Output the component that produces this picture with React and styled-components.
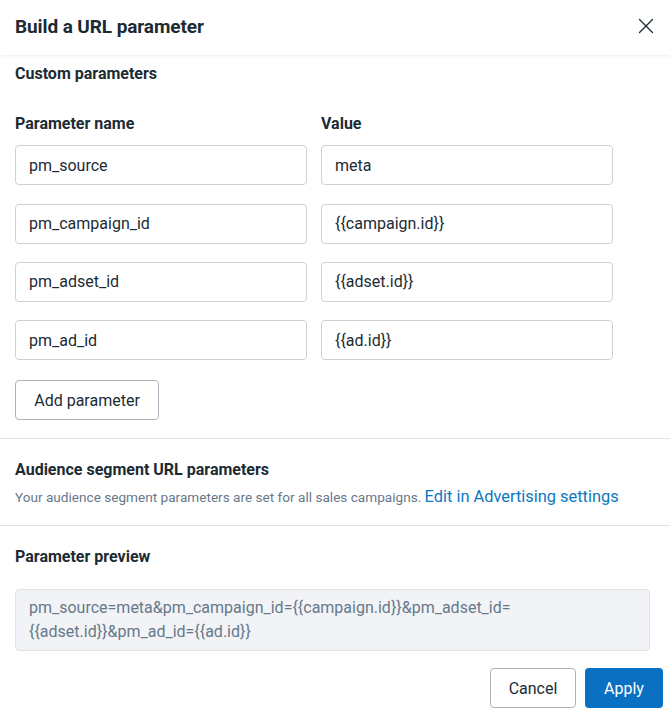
import React from 'react';
import styled, { createGlobalStyle } from 'styled-components';

const GlobalStyle = createGlobalStyle`
  html, body {
    margin: 0;
    padding: 0;
    background: #ffffff;
  }
  body {
    font-family: Roboto, "Liberation Sans", Arial, sans-serif;
    color: #1c2b33;
  }
`;

const params = [
  { name: 'pm_source', value: 'meta' },
  { name: 'pm_campaign_id', value: '{{campaign.id}}' },
  { name: 'pm_adset_id', value: '{{adset.id}}' },
  { name: 'pm_ad_id', value: '{{ad.id}}' },
];

const CloseIcon = () => (
  <svg width="16" height="16" viewBox="0 0 16 16" fill="none">
    <path d="M1.5 1.5L14.5 14.5M14.5 1.5L1.5 14.5" stroke="#1c2b33" strokeWidth="1.3" strokeLinecap="round" />
  </svg>
);

const App = () => {
  return (
    <>
      <GlobalStyle />
      <Dialog>
        <Header>
          <Title>Build a URL parameter</Title>
          <CloseButton aria-label="Close">
            <CloseIcon />
          </CloseButton>
        </Header>

        <Section $top={7} $bottom={18}>
          <SectionTitle>Custom parameters</SectionTitle>
          <Grid>
            <ColumnLabel>Parameter name</ColumnLabel>
            <ColumnLabel>Value</ColumnLabel>
            {params.map((p) => (
              <React.Fragment key={p.name}>
                <Field>{p.name}</Field>
                <Field>{p.value}</Field>
              </React.Fragment>
            ))}
          </Grid>
          <SecondaryButton $width={144}>Add parameter</SecondaryButton>
        </Section>

        <Divider />

        <Section $top={19} $bottom={17}>
          <SectionTitle>Audience segment URL parameters</SectionTitle>
          <Description>
            Your audience segment parameters are set for all sales campaigns.{' '}
            <Link href="#">Edit in Advertising settings</Link>
          </Description>
        </Section>

        <Divider />

        <Section $top={19} $bottom={0}>
          <SectionTitle>Parameter preview</SectionTitle>
          <Preview>
            pm_source=meta&amp;pm_campaign_id={'{{campaign.id}}'}&amp;pm_adset_id=
            <br />
            {'{{adset.id}}'}&amp;pm_ad_id={'{{ad.id}}'}
          </Preview>
        </Section>

        <Footer>
          <SecondaryButton $width={86}>Cancel</SecondaryButton>
          <PrimaryButton>Apply</PrimaryButton>
        </Footer>
      </Dialog>
    </>
  );
};

const Dialog = styled.div`
  width: 670px;
  height: 716px;
  background: #ffffff;
  display: flex;
  flex-direction: column;
  overflow: hidden;
`;

const Header = styled.div`
  height: 55px;
  flex-shrink: 0;
  display: flex;
  align-items: center;
  justify-content: space-between;
  padding: 0 12px 3px 15px;
  box-sizing: border-box;
  box-shadow: 0 1px 3px rgba(0, 0, 0, 0.08);
  position: relative;
  z-index: 1;
`;

const Title = styled.h1`
  margin: 0;
  font-size: 19px;
  font-weight: 700;
  color: #1c2b33;
  letter-spacing: -0.1px;
`;

const CloseButton = styled.button`
  width: 24px;
  height: 24px;
  padding: 0;
  border: none;
  background: transparent;
  display: flex;
  align-items: center;
  justify-content: center;
  cursor: pointer;
`;

const Section = styled.div`
  padding: ${(p) => p.$top}px 15px ${(p) => p.$bottom}px 15px;
  display: flex;
  flex-direction: column;
  align-items: flex-start;
`;

const SectionTitle = styled.h2`
  margin: 0;
  font-size: 16px;
  font-weight: 700;
  line-height: 24px;
  color: #1c2b33;
`;

const Grid = styled.div`
  display: grid;
  grid-template-columns: 292px 292px;
  column-gap: 14px;
  row-gap: 18.3px;
  margin-top: 28px;
  margin-bottom: 20px;
`;

const ColumnLabel = styled.div`
  font-size: 16px;
  font-weight: 700;
  line-height: 20px;
  margin-bottom: -7px;
`;

const Field = styled.div`
  height: 40px;
  box-sizing: border-box;
  border: 1px solid #cbd2d9;
  border-radius: 4px;
  padding: 0 13px;
  display: flex;
  align-items: center;
  font-size: 16px;
  color: #1c2b33;
`;

const SecondaryButton = styled.button`
  width: ${(p) => p.$width}px;
  height: 40px;
  box-sizing: border-box;
  border: 1px solid #a9b4bf;
  border-radius: 4px;
  background: #ffffff;
  font-family: inherit;
  font-size: 16px;
  font-weight: 400;
  color: #1c2b33;
  cursor: pointer;
`;

const PrimaryButton = styled.button`
  width: 78px;
  height: 40px;
  border: none;
  border-radius: 4px;
  background: #0a70c2;
  font-family: inherit;
  font-size: 16px;
  font-weight: 400;
  color: #ffffff;
  cursor: pointer;
`;

const Divider = styled.div`
  height: 1px;
  background: #dfe3e7;
  flex-shrink: 0;
`;

const Description = styled.p`
  margin: 4px 0 0;
  font-size: 13.6px;
  line-height: 22px;
  color: #67788a;
`;

const Link = styled.a`
  font-size: 16.4px;
  color: #0a78be;
  text-decoration: none;
`;

const Preview = styled.div`
  margin-top: 20px;
  width: 635px;
  box-sizing: border-box;
  background: #f1f3f6;
  border: 1px solid #dfe3e7;
  border-radius: 4px;
  padding: 6px 13px;
  font-size: 16px;
  line-height: 24px;
  color: #67788a;
`;

const Footer = styled.div`
  display: flex;
  justify-content: flex-end;
  gap: 9px;
  padding: 17px 7px 0 0;
`;

export default App;
